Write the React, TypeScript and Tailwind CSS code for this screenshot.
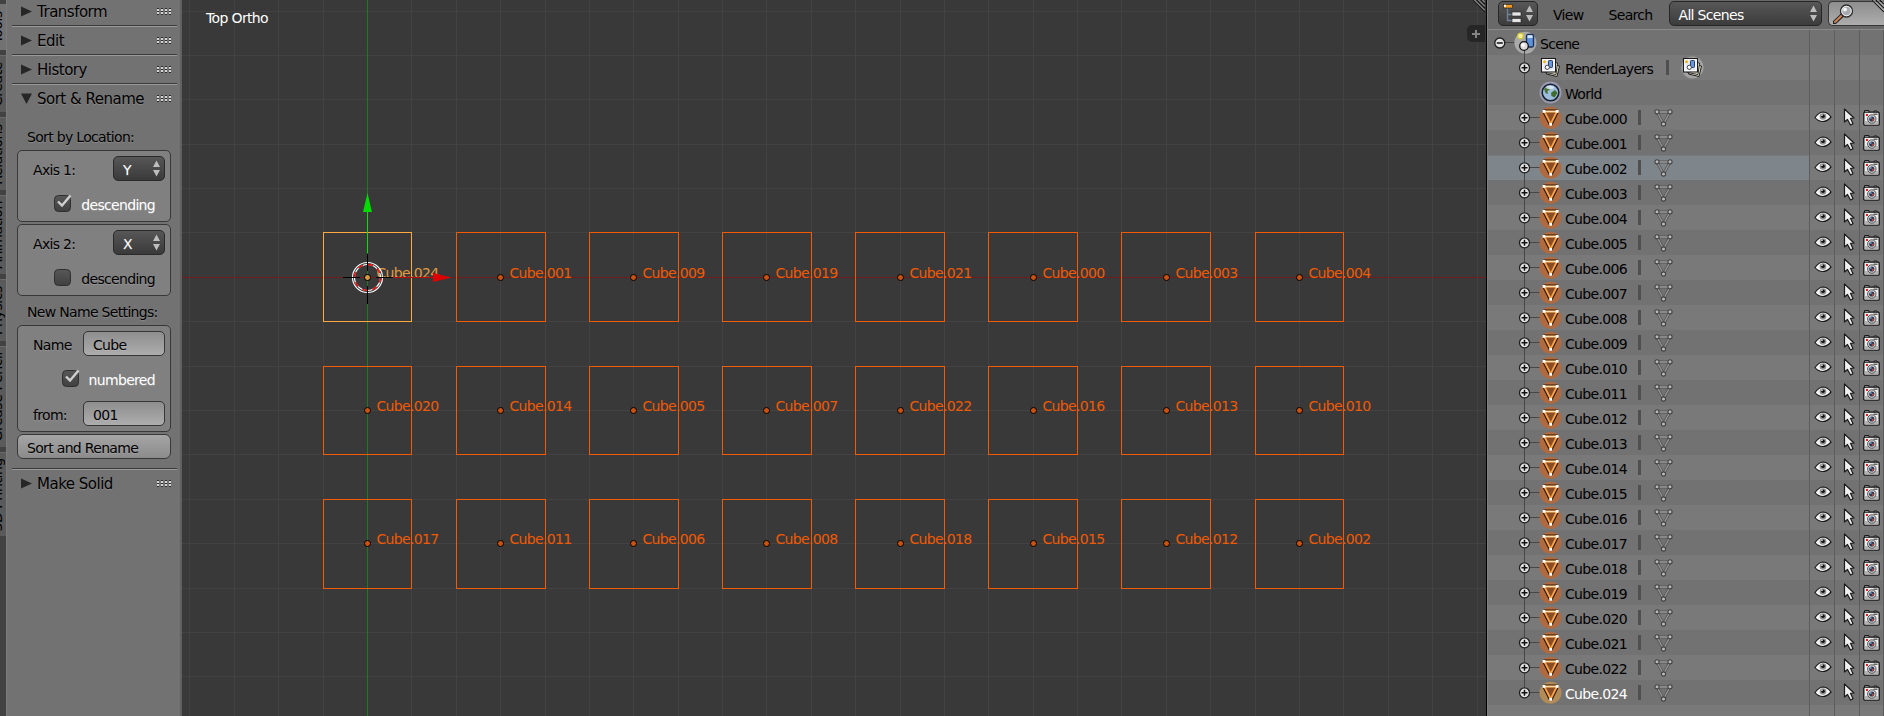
import React from "react";

const FONT = "font-['DejaVu_Sans',sans-serif]";

const TABS: { label: string; h: string; active?: boolean }[] = [
  { label: "Tools", h: "h-[46px]", active: true },
  { label: "Create", h: "h-[57px]" },
  { label: "Relations", h: "h-[73px]" },
  { label: "Animation", h: "h-[79px]" },
  { label: "Physics", h: "h-[62px]" },
  { label: "Grease Pencil", h: "h-[101px]" },
  { label: "3D Printing", h: "h-[84px]" },
];

const GRID = [
  ["024", "001", "009", "019", "021", "000", "003", "004"],
  ["020", "014", "005", "007", "022", "016", "013", "010"],
  ["017", "011", "006", "008", "018", "015", "012", "002"],
];

const OBJECTS = [
  "000", "001", "002", "003", "004", "005", "006", "007", "008", "009", "010", "011",
  "012", "013", "014", "015", "016", "017", "018", "019", "020", "021", "022", "024",
];

const gx = (k: number) => Math.floor(367.5 + 44.38 * k) - 182;
const gy = (k: number) => Math.floor(277.35 + 44.38 * k);

/* ---------- tool shelf ---------- */

function Dots() {
  return (
    <svg className="h-2 w-[15px]" viewBox="0 0 15 8" shapeRendering="crispEdges">
      {[0, 4, 8, 12].map((x) => (
        <g key={x}>
          <rect x={x} y="0" width="2" height="1" fill="#2c2c2c" />
          <rect x={x} y="1" width="2" height="2" fill="#d6d6d6" />
          <rect x={x} y="3" width="2" height="1" fill="#2c2c2c" />
          <rect x={x} y="4" width="2" height="2" fill="#d6d6d6" />
          <rect x={x} y="6" width="2" height="1" fill="#2c2c2c" />
        </g>
      ))}
    </svg>
  );
}

function PanelHeader({ title, open }: { title: string; open?: boolean }) {
  return (
    <div className="flex h-[27px] items-center pl-[9px] pr-[5px]">
      <svg className="h-[11px] w-[11px]" viewBox="0 0 11 11">
        <path d={open ? "M0 0.5H11L5.5 11Z" : "M0 0.5V10.5L11 5.5Z"} fill="#262626" />
      </svg>
      <span className="ml-[5px] flex-1 whitespace-nowrap pt-px text-[15px] leading-5 tracking-[-0.5px] text-black">{title}</span>
      <Dots />
    </div>
  );
}

function Separator() {
  return <div className="h-[2px] border-b border-t border-b-[#9a9a9a] border-t-[#3c3c3c]" />;
}

function Arrows() {
  return (
    <svg className="h-[17px] w-[7px]" viewBox="0 0 7 17">
      <path d="M0 7L3.5 0.5L7 7ZM0 10L3.5 16.5L7 10Z" fill="#bdbdbd" />
    </svg>
  );
}

function Select({ value }: { value: string }) {
  return (
    <div className="flex h-[25px] w-[52px] items-center justify-between rounded-[5px] border border-[#2a2a2a] bg-linear-to-b from-[#575757] to-[#3a3a3a] pl-[9px] pr-1 text-white">
      <span className="pt-[3px]">{value}</span>
      <Arrows />
    </div>
  );
}

function Check({ label, on }: { label: string; on?: boolean }) {
  return (
    <div className="flex h-[17px] items-center justify-end pr-[15px]">
      <svg className="h-[19px] w-[19px]" viewBox="0 0 19 19">
        <defs>
          <linearGradient id="chk" x1="0" x2="0" y1="0" y2="1">
            <stop offset="0" stopColor="#575757" />
            <stop offset="1" stopColor="#404040" />
          </linearGradient>
        </defs>
        <rect x="0.5" y="1.5" width="16" height="16" rx="4" fill="url(#chk)" stroke="#2f2f2f" />
        {on && <path d="M4 7.5L8 11.5L16.5 1.5" fill="none" stroke="#d0d0d0" strokeWidth="2.4" />}
      </svg>
      <span className={on ? "ml-2 pt-[3px] text-white" : "ml-2 pt-[3px]"}>{label}</span>
    </div>
  );
}

function Field({ label, value }: { label: string; value: string }) {
  return (
    <div className="flex h-[25px] items-center justify-between pl-[15px] pr-[5px]">
      <span className="pt-[3px]">{label}</span>
      <div className="flex h-[25px] w-[82px] items-center rounded-[5px] border border-[#363636] bg-linear-to-b from-[#8e8e8e] to-[#adadad] pl-[9px] pt-[3px]">
        {value}
      </div>
    </div>
  );
}

const BOX = "rounded-[5px] border border-[#383838] bg-[#808080]";

function AxisBox({ label, value, on }: { label: string; value: string; on?: boolean }) {
  return (
    <div className={`${BOX} h-[72px] pt-[5px]`}>
      <div className="flex items-center justify-between pl-[15px] pr-[5px]">
        <span className="pt-[3px]">{label}</span>
        <Select value={value} />
      </div>
      <div className="mt-[14px]">
        <Check label="descending" on={on} />
      </div>
    </div>
  );
}

function ToolShelf() {
  return (
    <div className="flex w-[182px] shrink-0">
      <div className="flex w-[6px] flex-col gap-[5px] overflow-hidden bg-[#424242] pt-[4px]">
        {TABS.map((t) => (
          <div
            key={t.label}
            className={`${t.h} flex w-[6px] shrink-0 items-center justify-end overflow-hidden ${
              t.active ? "bg-[#727272]" : "border-t border-[#6a6a6a] bg-[#5a5a5a]"
            }`}
          >
            <span className="mr-[2px] rotate-180 whitespace-nowrap leading-[14px] tracking-[-0.4px] text-black [writing-mode:vertical-rl]">
              {t.label}
            </span>
          </div>
        ))}
      </div>
      <div className="flex-1 border-l border-r-2 border-l-[#7c7c7c] border-r-[#606060] bg-[#727272] pl-[5px] pr-[3px] leading-4 text-black [text-shadow:0_1px_1px_rgba(255,255,255,0.18)]">
        <div className="-mt-[2px]">
          <PanelHeader title="Transform" />
          <Separator />
          <PanelHeader title="Edit" />
          <Separator />
          <PanelHeader title="History" />
          <Separator />
          <PanelHeader title="Sort & Rename" open />
        </div>
        <div className="flex flex-col pl-[5px] pr-[6px]">
          <div className="mt-[16px] h-[22px] whitespace-nowrap pl-[10px] leading-[18px]">Sort by Location:</div>
          <div className="flex flex-col gap-[2px]">
            <AxisBox label="Axis 1:" value="Y" on />
            <AxisBox label="Axis 2:" value="X" />
          </div>
          <div className="mt-[6px] h-[23px] whitespace-nowrap pl-[10px] leading-5">New Name Settings:</div>
          <div className={`${BOX} flex h-[107px] flex-col pt-[5px]`}>
            <Field label="Name" value="Cube" />
            <div className="mb-[14px] mt-[14px]">
              <Check label="numbered" on />
            </div>
            <Field label="from:" value="001" />
          </div>
          <div className="mt-[2px] flex h-[25px] items-center whitespace-nowrap rounded-[6px] border border-[#383838] bg-linear-to-b from-[#a5a5a5] to-[#8b8b8b] pl-[9px] pt-[3px]">
            Sort and Rename
          </div>
        </div>
        <div className="mt-[9px]">
          <Separator />
          <PanelHeader title="Make Solid" />
        </div>
      </div>
    </div>
  );
}

/* ---------- 3D viewport ---------- */

function Corner() {
  return (
    <svg className="h-3 w-3" viewBox="0 0 12 12">
      <path d="M0 0L12 12M4 0L12 8M8 0L12 4" stroke="#1c1c1c" strokeWidth="1.2" />
      <path d="M1.5 0L12 10.5M5.5 0L12 6.5M9.5 0L12 2.5" stroke="#b4b4b4" strokeWidth="1" />
    </svg>
  );
}

function Viewport() {
  const cols = Array.from({ length: 30 }, (_, i) => i - 4);
  const rows = Array.from({ length: 16 }, (_, i) => i - 6);
  const cx = gx(0);
  const cy = gy(0);
  return (
    <div className="relative w-[1304px] shrink-0 overflow-hidden bg-[#393939]">
      <svg className="block h-[716px] w-[1304px]" viewBox="0 0 1304 716">
        <g shapeRendering="crispEdges" fill="#424242">
          {cols.map((k) => (
            <rect key={`c${k}`} x={gx(k)} y="0" width="1" height="716" />
          ))}
          {rows.map((k) => (
            <rect key={`r${k}`} x="0" y={gy(k)} width="1304" height="1" />
          ))}
          <rect x="0" y={cy} width="1304" height="1" fill="#701c1c" />
          <rect x={cx} y="0" width="1" height="716" fill="#1f7a1f" />
        </g>
        {GRID.map((row, r) =>
          row.map((name, c) => {
            const active = r === 0 && c === 0;
            const l = gx(c * 3 - 1);
            const t = gy(r * 3 - 1);
            const w = gx(c * 3 + 1) - l;
            const h = gy(r * 3 + 1) - t;
            const color = active ? "#ffaa40" : "#f55a00";
            return (
              <g key={name}>
                <rect x={l + 0.5} y={t + 0.5} width={w} height={h} fill="none" stroke={color} shapeRendering="crispEdges" />
                <text x={gx(c * 3) + 9.5} y={gy(r * 3) + 1} fontSize="14" fill={active ? "#e09c42" : "#f15a02"}>
                  Cube.{name}
                </text>
                <circle cx={gx(c * 3) + 0.5} cy={gy(r * 3) + 0.5} r="3" fill={active ? "#d39a3f" : "#c8520f"} stroke="#000" strokeWidth="1" />
              </g>
            );
          })
        )}
        <g transform={`translate(${cx + 0.5} ${cy + 0.5})`}>
          <path d="M0 -25V-76" stroke="#0cdc0c" strokeWidth="1" shapeRendering="crispEdges" />
          <path d="M0 -84.5L4.5 -65.5H-4.5Z" fill="#00dc00" />
          <path d="M25 0H66" stroke="#b80808" strokeWidth="1" shapeRendering="crispEdges" />
          <path d="M84 0L65.500 -4.500V4.500Z" fill="#dc0000" />
          <circle r="13" fill="none" stroke="#fff" strokeWidth="1.200" />
          <circle r="13" fill="none" stroke="#f00000" strokeWidth="1.400" strokeDasharray="5.100 5.100" />
          <circle r="15" fill="none" stroke="#fff" strokeWidth="1.100" />
          <path d="M-25 0H-8M8 0H25M0 -24V-7M0 8V26" stroke="#000" strokeWidth="1" shapeRendering="crispEdges" />
          <circle r="3" fill="#d39a3f" stroke="#000" />
        </g>
        <text x="24" y="23" fontSize="14" fill="#fff" textLength="62">
          Top Ortho
        </text>
      </svg>
      <div className="absolute right-px top-0">
        <Corner />
      </div>
      <div className="absolute right-px top-[25px] flex h-[17px] w-[18px] items-center justify-center rounded-l-[5px] bg-[#262626]">
        <svg className="h-2 w-2" viewBox="0 0 8 8">
          <path d="M4 0V8M0 4H8" stroke="#848484" strokeWidth="2" />
        </svg>
      </div>
    </div>
  );
}

/* ---------- outliner ---------- */

function Expander({ x, y, minus }: { x: number; y: number; minus?: boolean }) {
  return (
    <g>
      <circle cx={x} cy={y} r="5" fill="#e4e4e4" stroke="#1e1e1e" strokeWidth="1.300" />
      <path d={minus ? `M${x - 3} ${y}H${x + 3}` : `M${x - 3} ${y}H${x + 3}M${x} ${y - 3}V${y + 3}`} stroke="#111" strokeWidth="1.500" />
    </g>
  );
}

function LayersGlyph() {
  return (
    <g>
      <path d="M8 6L19 8.500L16.500 19L6 16.500Z" fill="#f0edcf" stroke="#1c1c1c" strokeWidth="1" />
      <path d="M7 4L17 5.500L15.500 17L5 15Z" fill="#f8f6e4" stroke="#1c1c1c" strokeWidth="0.900" />
      <rect x="1" y="1" width="14" height="13.500" fill="#ffffff" stroke="#1c1c1c" strokeWidth="1.100" />
      <rect x="3" y="3" width="10" height="9.500" fill="#e2e9f5" />
      <rect x="8" y="3" width="4" height="7" rx="0.800" fill="#6b97da" stroke="#1c3157" strokeWidth="0.900" />
      <circle cx="6.800" cy="9.800" r="2.100" fill="#fff" stroke="#333" strokeWidth="0.900" />
      <circle cx="4" cy="4.300" r="1.500" fill="#f0b414" />
    </g>
  );
}

function Mesh() {
  return (
    <svg className="ml-[13px] h-[18px] w-[19px] shrink-0" viewBox="0 0 19 18">
      <path d="M3 3H16L9.500 15Z" fill="none" stroke="#555" strokeWidth="2.800" strokeLinejoin="round" />
      <path d="M3 3H16L9.500 15Z" fill="none" stroke="#999" strokeWidth="1.300" />
      {[[3, 2.8], [16, 2.8], [9.5, 15]].map(([x, y]) => (
        <circle key={`${x}`} cx={x} cy={y} r="2.100" fill="#b8b8b8" stroke="#424242" strokeWidth="1.100" />
      ))}
    </svg>
  );
}

function ObjectIcon({ active, last }: { active?: boolean; last?: boolean }) {
  return (
    <svg className="h-[25px] w-[77px] shrink-0" viewBox="0 0 77 25">
      <path d={last ? "M36.500 0V13" : "M36.500 0V25"} stroke="#474747" />
      <path d="M42 12.500H53" stroke="#474747" />
      <Expander x={36.5} y={12.8} />
      <circle cx="62.500" cy="12.700" r="11" fill={active ? "#b18c58" : "#b06a40"} />
      <path d="M56.300 6.500H69L62.700 19Z" fill="none" stroke="#2b1808" strokeWidth="4" strokeLinejoin="round" />
      <path d="M56.300 6.500H69L62.700 19Z" fill="#8a4c24" stroke="#fba348" strokeWidth="1.900" />
      <path d="M55 6.500H70.500" stroke="#ffdcb0" strokeWidth="1.300" />
      <rect x="54.500" y="5" width="2.800" height="2.800" fill="#fff" />
      <rect x="67.800" y="5" width="2.800" height="2.800" fill="#fff" />
      <rect x="61.300" y="18" width="2.800" height="2.800" fill="#fff" />
    </svg>
  );
}

function Eye() {
  return (
    <svg className="h-3 w-[18px]" viewBox="0 0 18 12">
      <path d="M1 6.500Q5 1 9.500 1Q14 1.500 17 6Q13 10.500 9 10.500Q4 10.500 1 6.500Z" fill="#f4f4f4" stroke="#181818" strokeWidth="1.200" />
      <circle cx="9" cy="5.500" r="3.300" fill="#8f8f8f" />
      <circle cx="9" cy="5.300" r="1.800" fill="#111" />
      <circle cx="8" cy="4.300" r="0.800" fill="#fff" />
    </svg>
  );
}

function Pointer() {
  return (
    <svg className="h-[18px] w-3" viewBox="0 0 12 18">
      <path d="M1.500 1V14L4.500 11.500L7.500 17L10 15.700L7.500 10.300L11 10Z" fill="#f0f0f0" stroke="#1a1a1a" strokeWidth="1.200" strokeLinejoin="round" />
    </svg>
  );
}

function Camera() {
  return (
    <svg className="h-[17px] w-[17px]" viewBox="0 0 17 17">
      <path d="M1.500 3.500V1.500H6V3.500M11 3V2H14V3" fill="#eee" stroke="#1a1a1a" />
      <rect x="0.800" y="3.200" width="15.400" height="13" rx="1.200" fill="#ececec" stroke="#151515" strokeWidth="1.300" />
      <rect x="1.800" y="12" width="13.400" height="3.500" fill="#b4b4b4" />
      <rect x="10.500" y="4.500" width="4" height="1.500" fill="#666" />
      <circle cx="8.800" cy="10" r="4.200" fill="#d6d6d6" stroke="#444" strokeWidth="0.900" />
      <circle cx="8.800" cy="10" r="2.600" fill="#23324e" />
      <circle cx="9.800" cy="10.800" r="1.200" fill="#b0453a" />
      <circle cx="7.800" cy="9" r="0.900" fill="#7ea1cc" />
      <rect x="3" y="5" width="2" height="2" fill="#e02020" />
    </svg>
  );
}

function Cells({ icons }: { icons?: boolean }) {
  const cell = "flex w-[25px] items-center border-l border-[#5c5c5c]";
  return (
    <div className="ml-auto flex shrink-0 self-stretch">
      <div className={`${cell} pb-px pl-1`}>{icons && <Eye />}</div>
      <div className={`${cell} pb-px pl-2`}>{icons && <Pointer />}</div>
      <div className={`${cell} border-r pb-px pl-[3px]`}>{icons && <Camera />}</div>
    </div>
  );
}

function Bar() {
  return <div className="h-[15px] w-[3px] shrink-0 bg-[#4f4f4f]" />;
}

function Row({ children, bg, icons }: { children?: React.ReactNode; bg: string; icons?: boolean }) {
  return (
    <div className={`flex h-[25px] shrink-0 items-center ${bg}`}>
      {children}
      <Cells icons={icons} />
    </div>
  );
}

function Outliner() {
  return (
    <div className="flex w-[398px] shrink-0 border-l border-black">
      <div className="w-px bg-[#808080]" />
      <div className="flex w-[396px] shrink-0 flex-col overflow-hidden bg-[#727272] leading-4 text-black">
        <div className="relative flex h-[29px] shrink-0 items-start bg-[#696969] pl-[10px] pt-[1px]">
          <div className="flex h-[25px] w-[40px] items-center justify-between rounded-[5px] border border-[#262626] bg-linear-to-b from-[#575757] to-[#3c3c3c] pl-1 pr-1">
            <svg className="h-[19px] w-[19px]" viewBox="0 0 19 19">
              <path d="M4.500 4.500V16.500H10M4.500 10.500H10" fill="none" stroke="#6f8298" strokeWidth="1.400" />
              <rect x="0.500" y="0.500" width="9" height="3.500" fill="#f29a22" stroke="#222" strokeWidth="0.600" />
              <rect x="1" y="0.800" width="2" height="2" fill="#fff" />
              <rect x="9" y="8" width="9" height="4" fill="#e6e6e6" stroke="#222" strokeWidth="0.600" />
              <rect x="9" y="14.500" width="9" height="4" fill="#e6e6e6" stroke="#222" strokeWidth="0.600" />
            </svg>
            <Arrows />
          </div>
          <span className="ml-[15px] mt-[6px]">View</span>
          <span className="ml-[25px] mt-[6px] w-[60px]">Search</span>
          <div className="flex h-[25px] w-[153px] items-center justify-between rounded-[5px] border border-[#262626] bg-linear-to-b from-[#575757] to-[#3c3c3c] pl-[9px] pr-1 text-white">
            <span className="pt-[3px]">All Scenes</span>
            <Arrows />
          </div>
          <div className="ml-[6px] flex h-[25px] flex-1 items-center rounded-l-[5px] border border-r-0 border-[#363636] bg-linear-to-b from-[#8e8e8e] to-[#adadad] pl-1">
            <svg className="h-5 w-[21px]" viewBox="0 0 21 20">
              <path d="M1.500 18.500L9.500 11" stroke="#1e1e1e" strokeWidth="4" strokeLinecap="round" />
              <path d="M2 18L8.500 11.800" stroke="#c98358" strokeWidth="2.200" strokeLinecap="round" />
              <circle cx="13.500" cy="7" r="6" fill="#b9bcc2" stroke="#2c2c2c" strokeWidth="1.300" />
              <circle cx="13.500" cy="7" r="4.700" fill="#a8aab0" stroke="#ececec" strokeWidth="1" />
              <circle cx="12" cy="5.500" r="1.900" fill="#f4f4f4" />
            </svg>
          </div>
          <div className="absolute right-0 top-0">
            <Corner />
          </div>
        </div>
        <div className="h-px shrink-0 bg-[#8a8a8a]" />

        <Row bg="bg-[#727272]">
          <svg className="h-[25px] w-[52px] shrink-0" viewBox="0 0 52 25">
            <path d="M17 12.500H28" stroke="#474747" />
            <Expander x={11.8} y={13} minus />
            <circle cx="37.400" cy="12.700" r="11" fill="#a9a9a9" />
            <path d="M36.500 20V25" stroke="#474747" />
            <circle cx="32.500" cy="6" r="2.800" fill="#f5f0a0" stroke="#cfc43a" strokeWidth="1.200" />
            <rect x="38.500" y="4.500" width="7" height="12.500" rx="1.500" fill="#5e92dc" stroke="#1c2f55" strokeWidth="1.300" />
            <rect x="39.500" y="5.200" width="5" height="2.800" fill="#d3e4fa" />
            <circle cx="36" cy="16" r="4.300" fill="#dcdcdc" stroke="#111" strokeWidth="1.300" />
            <circle cx="35" cy="15" r="1.800" fill="#fff" />
          </svg>
          <span className="pt-[2px]">Scene</span>
        </Row>
        <Row bg="bg-[#797979]">
          <svg className="h-[25px] w-[77px] shrink-0" viewBox="0 0 77 25">
            <path d="M36.500 0V25" stroke="#474747" />
            <Expander x={36.5} y={12.8} />
            <g transform="translate(52.500 2.500)">
              <LayersGlyph />
            </g>
          </svg>
          <span className="w-[101px] whitespace-nowrap pt-[2px]">RenderLayers</span>
          <Bar />
          <svg className="ml-3 h-[25px] w-[24px] shrink-0" viewBox="0 0 24 25">
            <circle cx="11.500" cy="12.500" r="11" fill="#a2a2a2" />
            <g transform="translate(1.500 2.500)">
              <LayersGlyph />
            </g>
          </svg>
        </Row>
        <Row bg="bg-[#727272]">
          <svg className="h-[25px] w-[77px] shrink-0" viewBox="0 0 77 25">
            <path d="M36.500 0V25" stroke="#474747" />
            <circle cx="62.500" cy="12.500" r="11" fill="#9a9aae" />
            <circle cx="62.500" cy="12.500" r="8.300" fill="#9dbddc" stroke="#16202e" strokeWidth="1.500" />
            <path d="M56 9Q58 6.500 60.500 7L62 9.500L59.500 11L60 14L57.500 13Z" fill="#4a7434" />
            <path d="M63 13L67 10L69.500 13L66.500 17.500L63.500 16Z" fill="#3f6b2c" />
            <ellipse cx="62" cy="7.500" rx="4" ry="1.700" fill="#eef5fc" opacity="0.700" />
          </svg>
          <span className="pt-[2px]">World</span>
        </Row>
        {OBJECTS.map((n, i) => {
          const active = n === "024";
          const bg = i % 2 === 0 ? "bg-[#797979]" : "bg-[#727272]";
          return (
            <div key={n} className={`flex h-[25px] shrink-0 items-center ${bg}`}>
              <div className={n === "002" ? "flex h-6 w-[321px] items-center bg-[#7f868b]" : "flex h-[25px] items-center"}>
                <ObjectIcon active={active} last={active} />
                <span className={active ? "w-[73px] pt-[2px] text-white" : "w-[73px] pt-[2px]"}>Cube.{n}</span>
                <Bar />
                <Mesh />
              </div>
              <Cells icons />
            </div>
          );
        })}
        <Row bg="bg-[#797979]" />
      </div>
    </div>
  );
}

export default function App() {
  return (
    <div className={`flex h-[716px] w-[1884px] overflow-hidden bg-[#393939] text-[14px] tracking-[-0.68px] ${FONT}`}>
      <ToolShelf />
      <Viewport />
      <Outliner />
    </div>
  );
}
